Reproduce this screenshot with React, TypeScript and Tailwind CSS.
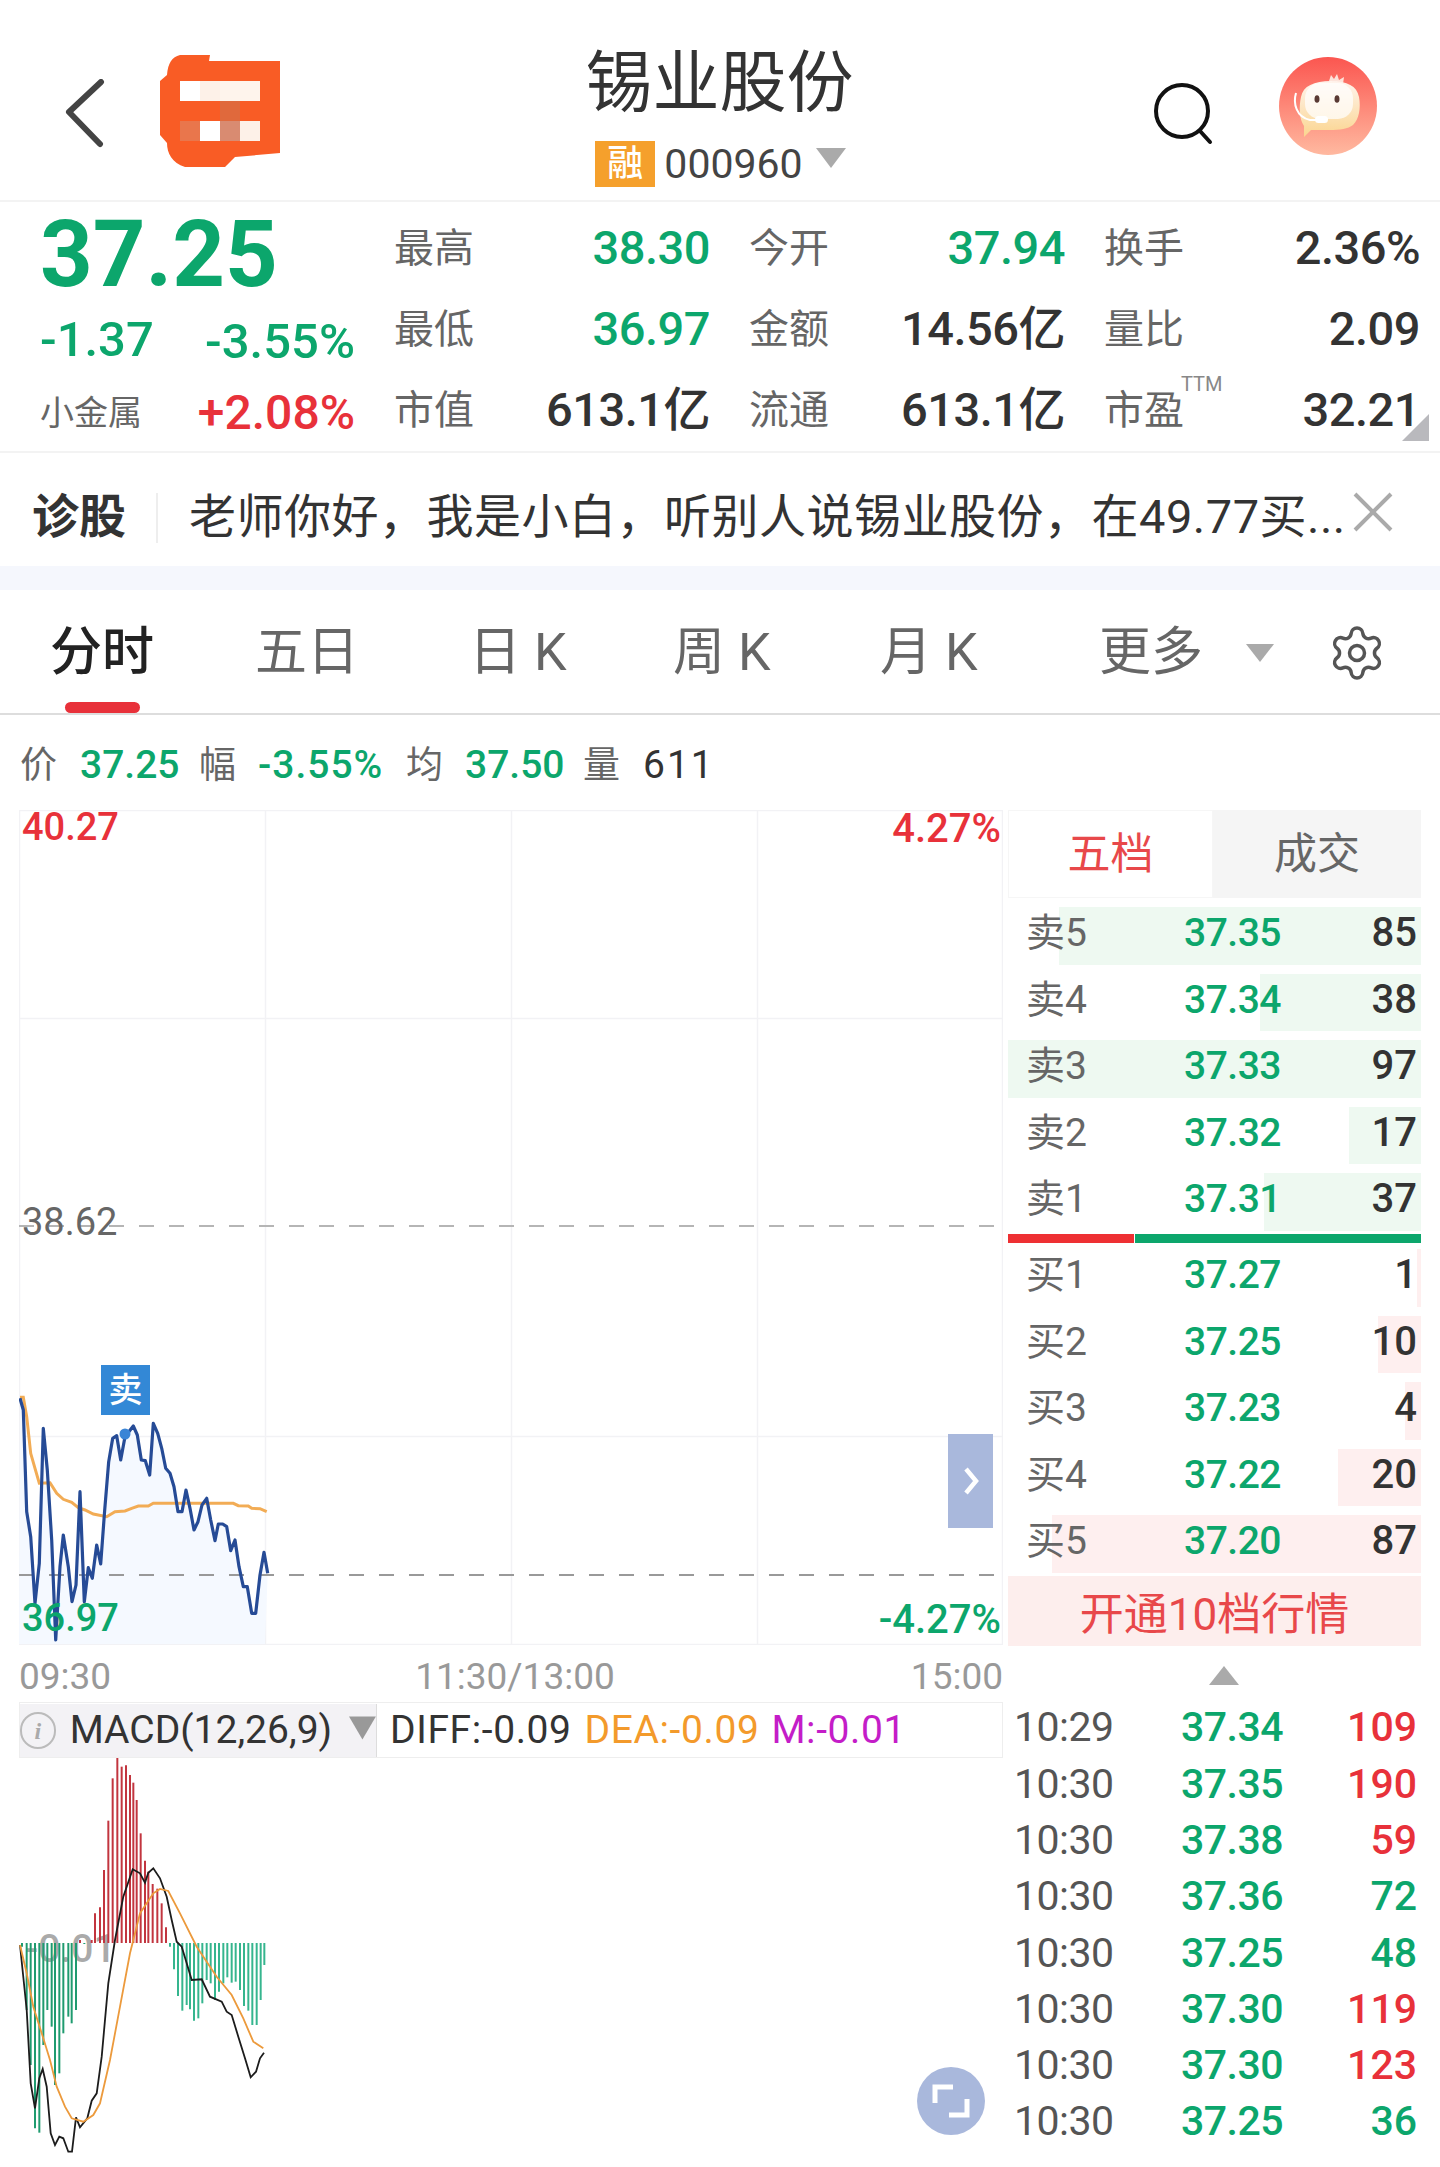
import { Settings } from "lucide-react";

const GREEN = "text-[#0ca66c]";

const stats = [
  [
    { label: "最高", value: "38.30", color: GREEN },
    { label: "最低", value: "36.97", color: GREEN },
    { label: "市值", value: "613.1亿", color: "text-[#333]" },
  ],
  [
    { label: "今开", value: "37.94", color: GREEN },
    { label: "金额", value: "14.56亿", color: "text-[#333]" },
    { label: "流通", value: "613.1亿", color: "text-[#333]" },
  ],
  [
    { label: "换手", value: "2.36%", color: "text-[#333]" },
    { label: "量比", value: "2.09", color: "text-[#333]" },
    { label: "市盈", value: "32.21", color: "text-[#333]" },
  ],
];

const sells = [
  { label: "卖5", price: "37.35", qty: "85", bar: 362 },
  { label: "卖4", price: "37.34", qty: "38", bar: 161 },
  { label: "卖3", price: "37.33", qty: "97", bar: 413 },
  { label: "卖2", price: "37.32", qty: "17", bar: 72 },
  { label: "卖1", price: "37.31", qty: "37", bar: 157 },
];

const buys = [
  { label: "买1", price: "37.27", qty: "1", bar: 4 },
  { label: "买2", price: "37.25", qty: "10", bar: 43 },
  { label: "买3", price: "37.23", qty: "4", bar: 16 },
  { label: "买4", price: "37.22", qty: "20", bar: 83 },
  { label: "买5", price: "37.20", qty: "87", bar: 369 },
];

const ticks = [
  { time: "10:29", price: "37.34", vol: "109", up: true },
  { time: "10:30", price: "37.35", vol: "190", up: true },
  { time: "10:30", price: "37.38", vol: "59", up: true },
  { time: "10:30", price: "37.36", vol: "72", up: false },
  { time: "10:30", price: "37.25", vol: "48", up: false },
  { time: "10:30", price: "37.30", vol: "119", up: true },
  { time: "10:30", price: "37.30", vol: "123", up: true },
  { time: "10:30", price: "37.25", vol: "36", up: false },
];

// points read off the 3x crops of the chart
const priceLine = [
  [60, 175], [70, 210], [80, 515], [92, 590], [105, 790], [118, 670], [130, 265], [142, 390], [155, 600], [167, 900],
  [180, 680], [190, 585], [205, 680], [216, 785], [228, 735], [240, 455], [253, 785], [265, 683], [277, 715], [290, 615],
  [302, 672], [314, 510], [326, 365], [338, 295], [350, 287], [362, 360], [375, 290], [400, 258], [412, 285], [424, 360],
  [436, 362], [449, 405], [460, 250], [473, 280], [485, 325], [497, 385], [510, 400], [522, 440], [534, 515], [546, 515],
  [558, 450], [570, 505], [582, 570], [594, 545], [606, 495], [620, 475], [632, 540], [645, 602], [655, 552], [668, 552],
  [680, 560], [692, 632], [705, 600], [717, 680], [730, 740], [742, 740], [755, 820], [767, 820], [780, 705], [792, 637],
  [803, 700],
];

const avgLine = [
  [60, 172], [70, 172], [80, 230], [92, 340], [105, 385], [118, 430], [150, 428], [170, 460], [190, 478], [215, 487],
  [235, 503], [255, 510], [280, 522], [320, 530], [345, 515], [375, 513], [395, 505], [415, 498], [445, 498], [460, 490],
  [520, 490], [700, 490], [715, 497], [745, 498], [755, 505], [780, 506], [800, 515],
];

const macdBars = [
  [66, 770], [80, 960], [92, 1125], [105, 1315], [118, 1328], [130, 1065], [142, 960], [155, 1010], [165, 1185], [178, 1150],
  [190, 1030], [205, 980], [215, 1000], [228, 960], [240, 750], [253, 762], [275, 750], [285, 670], [300, 652], [312, 540],
  [325, 392], [338, 265], [352, 203], [365, 230], [378, 226], [390, 255], [400, 278], [410, 330], [422, 430], [435, 512],
  [445, 545], [458, 582], [472, 596], [485, 640], [498, 712], [510, 770], [522, 838], [534, 918], [547, 962], [560, 945],
  [570, 958], [582, 992], [595, 985], [607, 940], [620, 870], [632, 880], [645, 930], [657, 905], [670, 880], [682, 862],
  [695, 878], [707, 875], [720, 900], [732, 948], [745, 962], [757, 1005], [770, 1005], [782, 930], [793, 825],
];

const diffLine = [
  [60, 765], [80, 960], [92, 1180], [105, 1255], [118, 1165], [128, 1137], [140, 1190], [152, 1330], [165, 1365], [178, 1340],
  [190, 1345], [205, 1385], [216, 1385], [228, 1282], [240, 1312], [262, 1285], [275, 1232], [290, 1210], [305, 1100], [325, 880],
  [345, 750], [370, 620], [398, 538], [420, 550], [435, 578], [445, 548], [460, 535], [480, 565], [500, 620], [515, 690],
  [530, 755], [545, 770], [560, 820], [575, 870], [605, 868], [630, 920], [665, 935], [680, 965], [695, 975], [715, 1040],
  [735, 1105], [752, 1162], [768, 1145], [780, 1105], [792, 1088],
];

const deaLine = [
  [60, 765], [80, 850], [100, 950], [130, 1045], [150, 1110], [170, 1190], [195, 1250], [215, 1285], [250, 1295], [280, 1275],
  [300, 1240], [330, 1110], [360, 950], [390, 790], [420, 670], [460, 610], [480, 597], [505, 603], [540, 670], [590, 770],
  [650, 860], [695, 915], [730, 985], [760, 1055], [790, 1075],
];

// crop coordinates to svg coordinates
const toPrice = (p: number[]) => `${(p[0] / 3 - 19).toFixed(1)},${(p[1] / 3 + 1340 - 810).toFixed(1)}`;
const toMacd = (p: number[]) => `${(p[0] / 3 - 19).toFixed(1)},${(p[1] / 3 + 1690 - 1758).toFixed(1)}`;

function BookRow({ label, price, qty, bar, tone }: { label: string; price: string; qty: string; bar: number; tone: string }) {
  return (
    <div className="relative flex items-center h-[57.5px] mb-[9px] pb-[5px]">
      <div className={`absolute right-0 top-0 bottom-0 ${tone}`} style={{ width: bar }} />
      <span className="relative w-[176px] pl-[18px] text-[39px] text-[#666]">{label}</span>
      <span className={`relative w-[100px] text-[39px] font-medium tracking-[-0.5px] ${GREEN}`}>{price}</span>
      <span className="relative flex-1 pr-[4px] text-right text-[40px] font-medium text-[#333]">{qty}</span>
    </div>
  );
}

function PriceChart() {
  return (
    <svg width="984" height="835" className="block">
      {[0, 208, 626, 834].map((y) => (
        <line key={y} x1="0" x2="984" y1={y + 0.5} y2={y + 0.5} stroke="#f2f2f5" strokeWidth="1.5" />
      ))}
      {[0, 246, 492, 738, 983].map((x) => (
        <line key={x} x1={x + 0.5} x2={x + 0.5} y1="0" y2="835" stroke="#f2f2f5" strokeWidth="1.5" />
      ))}
      <polygon points={`0,834 ${priceLine.map(toPrice).join(" ")} 246,834`} fill="#f5f9ff" />
      <line x1="0" x2="984" y1="416" y2="416" stroke="#b5b5b5" strokeWidth="2" strokeDasharray="15 15" />
      <line x1="0" x2="984" y1="765" y2="765" stroke="#999" strokeWidth="2" strokeDasharray="15 15" />
      <polyline points={avgLine.map(toPrice).join(" ")} fill="none" stroke="#f2ac55" strokeWidth="3" />
      <polyline points={priceLine.map(toPrice).join(" ")} fill="none" stroke="#264b96" strokeWidth="3.2" strokeLinejoin="round" />
      <circle cx="106" cy="624" r="5.5" fill="#3a85d6" />
    </svg>
  );
}

function MacdChart() {
  return (
    <svg width="984" height="409" className="block">
      {macdBars.map((b) => {
        const x = b[0] / 3 - 19;
        const y = b[1] / 3 + 1690 - 1758;
        const zero = 185;
        const up = y < zero;
        const color = up ? "#c2353f" : b[0] > 500 ? "#35b58e" : "#1f9b6f";
        return <line key={b[0]} x1={x} x2={x} y1={zero} y2={y} stroke={color} strokeWidth="2" />;
      })}
      <polyline points={diffLine.map(toMacd).join(" ")} fill="none" stroke="#1c1c1c" strokeWidth="1.8" />
      <polyline points={deaLine.map(toMacd).join(" ")} fill="none" stroke="#ec9a3c" strokeWidth="1.8" />
    </svg>
  );
}

function Avatar() {
  return (
    <svg width="98" height="98" viewBox="0 0 98 98" className="block">
      <defs>
        <linearGradient id="av" x1="0" y1="0" x2="0" y2="1">
          <stop offset="0" stopColor="#fb5650" />
          <stop offset="1" stopColor="#ffb9a0" />
        </linearGradient>
        <linearGradient id="face" x1="0" y1="0" x2="0" y2="1">
          <stop offset="0" stopColor="#fff4ee" />
          <stop offset="1" stopColor="#fbd58f" />
        </linearGradient>
      </defs>
      <circle cx="49" cy="49" r="49" fill="url(#av)" />
      <path d="M50 24l2-6 3 4 3-5 2 6 5-3-1 7z" fill="#fde3da" />
      <path d="M22 40c2-11 13-16 30-16 16 0 26 5 28 16 2 11 0 22-6 28-5 4-13 5-24 5H32l-7 7 0-11c-5-7-5-20-3-29z" fill="url(#face)" />
      <rect x="26" y="26" width="48" height="36" rx="15" fill="#fff" fillOpacity="0.72" />
      <ellipse cx="38" cy="42" rx="2.5" ry="3.8" fill="#5a3a34" />
      <ellipse cx="58" cy="42" rx="2.5" ry="3.8" fill="#5a3a34" />
      <path d="M17 36c-3 10 0 24 14 27h12" fill="none" stroke="#fff" strokeWidth="2" />
      <rect x="36" y="59" width="13" height="7" rx="3.5" fill="#fff" />
    </svg>
  );
}

export default function App() {
  return (
    <div className="relative w-[1440px] h-[2167px] overflow-hidden bg-white font-[Roboto,'Noto_Sans_CJK_SC',sans-serif] text-[#333]">
      {/* header */}
      <header className="flex h-[202px] border-b-2 border-[#f3f3f3]">
        <div className="flex items-start pl-[65px] pt-[55px]">
          <svg width="40" height="70" viewBox="0 0 40 70" className="mt-[24px]">
            <path d="M36 3L4 33l31 32" fill="none" stroke="#444" strokeWidth="6" strokeLinecap="round" strokeLinejoin="round" />
          </svg>
          <svg width="120" height="112" viewBox="0 0 120 112" className="ml-[55px]">
            <path d="M20 0h30l-1 6h71v92l-45 4-10 10H25C12 108 7 98 7 88L0 80V26l7-6C8 8 12 2 20 0z" fill="#f95c25" />
            <rect x="20" y="26" width="20" height="20" fill="#fff" />
            <rect x="40" y="26" width="20" height="20" fill="#fdf1e8" />
            <rect x="60" y="26" width="40" height="20" fill="#fef4ec" />
            <rect x="60" y="46" width="20" height="20" fill="#e0693c" />
            <rect x="20" y="66" width="20" height="20" fill="#e9764c" />
            <rect x="40" y="66" width="20" height="20" fill="#fff" />
            <rect x="60" y="66" width="20" height="20" fill="#d98b71" />
            <rect x="80" y="66" width="20" height="20" fill="#fdf1e8" />
          </svg>
        </div>
        <div className="flex-1 flex flex-col items-center pl-[5px] pt-[43px]">
          <div className="text-[67px] leading-[80px] text-[#333]">锡业股份</div>
          <div className="flex items-center mt-[18px] pl-[2px]">
            <span className="flex items-center justify-center w-[60px] h-[46px] bg-[#f5a02c] text-white text-[36px] font-medium">融</span>
            <span className="ml-[9px] text-[41px] leading-[46px] text-[#444]">000960</span>
            <svg width="30" height="20" viewBox="0 0 30 20" className="ml-[13px] mb-[12px]">
              <polygon points="0,0 30,0 15,20" fill="#aaa" />
            </svg>
          </div>
        </div>
        <div className="flex items-start pt-[57px] pr-[63px]">
          <svg width="60" height="64" viewBox="0 0 60 64" className="mt-[25px]">
            <ellipse cx="28" cy="29" rx="26" ry="26" fill="none" stroke="#111" strokeWidth="4" />
            <path d="M46 49l10 11" fill="none" stroke="#111" strokeWidth="4" strokeLinecap="round" />
          </svg>
          <div className="ml-[65px]">
            <Avatar />
          </div>
        </div>
      </header>

      {/* quote block */}
      <section className="relative flex h-[251px] pl-[40px] border-b-2 border-[#f3f3f3]">
        <div className="w-[354px] pr-[39px] flex flex-col">
          <div className={`h-[98px] pt-[4px] text-[92px] leading-[98px] font-bold ${GREEN}`}>37.25</div>
          <div className={`flex items-center justify-between h-[80px] font-medium ${GREEN}`}>
            <span className="text-[49px]">-1.37</span>
            <span className="pt-[4px] text-[49px]">-3.55%</span>
          </div>
          <div className="flex items-center justify-between h-[66px]">
            <span className="text-[34px] text-[#666]">小金属</span>
            <span className="text-[48px] font-medium text-[#e8313a]">+2.08%</span>
          </div>
        </div>
        <div className="flex gap-[39px] pt-[6px]">
          {stats.map((col, i) => (
            <div key={i} className="w-[316px] flex flex-col">
              {col.map((s) => (
                <div key={s.label} className="flex items-center justify-between h-[83px]">
                  <span className="text-[40px] text-[#666]">{s.label}</span>
                  <span className={`text-[47px] font-medium tracking-[-0.5px] ${s.color}`}>{s.value}</span>
                </div>
              ))}
            </div>
          ))}
        </div>
        <span className="absolute left-[1181px] top-[171px] text-[20px] leading-[22px] text-[#888]">TTM</span>
        <svg width="27" height="27" className="absolute left-[1402px] top-[212px]">
          <polygon points="27,0 27,27 0,27" fill="#b9b9bd" />
        </svg>
      </section>

      {/* ai banner */}
      <section className="flex items-center h-[113px] pl-[32px] pt-[16px]">
        <span className="w-[94px] text-[47px] font-bold text-[#333]">诊股</span>
        <span className="ml-[30px] w-[2px] h-[50px] bg-[#eee]" />
        <span className="ml-[31px] w-[1165px] text-[47px] tracking-[0.5px] whitespace-nowrap text-[#333]">老师你好，我是小白，听别人说锡业股份，在49.77买...</span>
        <svg width="40" height="40" viewBox="0 0 40 40" className="mb-[12px] -ml-[1px]">
          <path d="M2 2l36 36M38 2L2 38" fill="none" stroke="#aaa" strokeWidth="4" />
        </svg>
      </section>
      <div className="h-[24px] bg-[#f5f7fd]" />

      {/* period tabs */}
      <nav className="relative flex items-center h-[125px] pl-[50px] pt-[7px] pb-[4px] border-b-2 border-[#ddd] text-[52px] text-[#666]">
        <span className="w-[205px] text-[#222] font-medium">分时</span>
        <span className="w-[214px]">五日</span>
        <span className="w-[204px]">日 K</span>
        <span className="w-[207px]">周 K</span>
        <span className="w-[219px]">月 K</span>
        <span className="w-[147px]">更多</span>
        <svg width="28" height="18" viewBox="0 0 28 18">
          <polygon points="0,0 28,0 14,18" fill="#aaa" />
        </svg>
        <Settings className="ml-[53px]" size={60} strokeWidth={1.4} color="#555" />
        <span className="absolute left-[65px] bottom-0 w-[75px] h-[11px] rounded-full bg-[#e8313a]" />
      </nav>

      {/* last price strip */}
      <div className="flex items-center h-[95px] pl-[20px] pt-[6px]">
        <span className="w-[60px] text-[37px] text-[#666]">价</span>
        <span className={`w-[119px] text-[39px] font-medium ${GREEN}`}>37.25</span>
        <span className="w-[59px] text-[37px] text-[#666]">幅</span>
        <span className={`w-[148px] text-[39px] font-medium tracking-[1px] ${GREEN}`}>-3.55%</span>
        <span className="w-[59px] text-[37px] text-[#666]">均</span>
        <span className={`w-[118px] text-[39px] font-medium ${GREEN}`}>37.50</span>
        <span className="w-[60px] text-[37px] text-[#666]">量</span>
        <span className="text-[39px] tracking-[2px] text-[#333]">611</span>
      </div>

      <main className="flex">
        {/* charts */}
        <div className="ml-[19px] w-[984px] flex flex-col">
          <div className="relative h-[835px]">
            <PriceChart />
            <span className="absolute left-[3px] top-[-11px] text-[38px] font-medium text-[#e8313a]">40.27</span>
            <span className="absolute right-[2px] top-[-11px] text-[40px] font-medium text-[#e8313a]">4.27%</span>
            <span className="absolute left-[3px] top-[384px] text-[38px] text-[#666]">38.62</span>
            <span className={`absolute left-[3px] top-[780px] text-[38px] font-medium ${GREEN}`}>36.97</span>
            <span className={`absolute right-[2px] top-[780px] text-[40px] font-medium ${GREEN}`}>-4.27%</span>
            <span className="absolute left-[82px] top-[555px] flex items-center justify-center w-[49px] h-[50px] bg-[#3388d6] text-[34px] font-medium text-white">卖</span>
            <div className="absolute left-[929px] top-[624px] flex items-center justify-center w-[45px] h-[94px] bg-[#a9b8dc]">
              <svg width="16" height="30" viewBox="0 0 16 30">
                <path d="M3 3l10 12L3 27" fill="none" stroke="#fff" strokeWidth="4.5" />
              </svg>
            </div>
          </div>
          <div className="flex items-center justify-between h-[57px] pt-[6px] text-[37px] text-[#999]">
            <span>09:30</span>
            <span className="-mr-[8px]">11:30/13:00</span>
            <span>15:00</span>
          </div>
          <div className="flex items-center h-[56px] pt-[1px] text-[39px] border border-[#eee]">
            <div className="flex items-center h-full w-[357px] shrink-0 bg-[#f3f2f5] border-r border-[#ddd]">
              <span className="flex items-center justify-center w-[37px] h-[37px] rounded-full border-2 border-[#bbb] font-['Liberation_Serif',serif] italic font-bold text-[24px] text-[#aaa]">i</span>
              <span className="ml-[14px] text-[#333]">MACD(12,26,9)</span>
              <svg width="28" height="24" viewBox="0 0 28 24" className="ml-[17px] mb-[6px]">
                <polygon points="0,0 28,0 14,24" fill="#999" />
              </svg>
            </div>
            <span className="ml-[13px] tracking-[0.6px] text-[#333]">DIFF:-0.09</span>
            <span className="ml-[13px] tracking-[0.6px] text-[#f39a2b]">DEA:-0.09</span>
            <span className="ml-[12px] tracking-[0.6px] text-[#c41dc8]">M:-0.01</span>
          </div>
          <div className="relative h-[409px]">
            <span className="absolute left-[6px] top-[162px] text-[39px] font-medium text-[#aaa]">-0.01</span>
            <div className="absolute inset-0">
              <MacdChart />
            </div>
            <div className="absolute left-[898px] top-[309px] flex items-center justify-center w-[68px] h-[68px] rounded-full bg-[#a9b8dc]">
              <svg width="40" height="36" viewBox="0 0 40 36">
                <path d="M4 20V4h18M36 16v16H18" fill="none" stroke="#fff" strokeWidth="5" />
              </svg>
            </div>
          </div>
        </div>

        {/* order book and trades */}
        <div className="ml-[5px] w-[413px] flex flex-col">
          <div className="flex h-[88px] mb-[9px] text-[43px]">
            <span className="flex items-center justify-center w-[205px] text-[#e8484a] border border-[#f6f6f6]">五档</span>
            <span className="flex items-center justify-center flex-1 bg-[#f5f5f5] text-[#666]">成交</span>
          </div>
          {sells.map((r) => (
            <BookRow key={r.label} {...r} tone="bg-[#eef9f1]" />
          ))}
          <div className="flex h-[9px] -mt-[5.5px] mb-[6px]">
            <div className="w-[126px] bg-[#ee3033]" />
            <div className="w-[1px]" />
            <div className="flex-1 bg-[#0ca66c]" />
          </div>
          {buys.map((r) => (
            <BookRow key={r.label} {...r} tone="bg-[#feefef]" />
          ))}
          <div className="flex items-center justify-center h-[70px] pt-[8px] -mt-[5.5px] bg-[#fdeeed] text-[44px] text-[#e8484a]">开通10档行情</div>
          <div className="flex justify-center h-[53px] pt-[20px] pl-[18px]">
            <svg width="30" height="19" viewBox="0 0 30 19">
              <polygon points="15,0 30,19 0,19" fill="#aaa" />
            </svg>
          </div>
          {ticks.map((t, i) => (
            <div key={i} className="flex items-center h-[56.3px] pt-[2px] text-[41px]">
              <span className="w-[173px] pl-[6px] tracking-[-0.5px] text-[#555]">{t.time}</span>
              <span className={`w-[110px] font-medium tracking-[-0.5px] ${GREEN}`}>{t.price}</span>
              <span className={`flex-1 pr-[4px] text-right font-medium ${t.up ? "text-[#e8313a]" : GREEN}`}>{t.vol}</span>
            </div>
          ))}
        </div>
      </main>
    </div>
  );
}
